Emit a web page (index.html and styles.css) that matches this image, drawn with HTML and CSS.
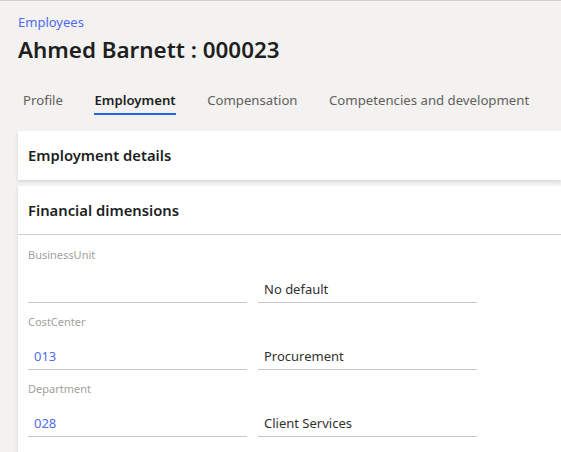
FILE: index.html
```html
<!DOCTYPE html>
<html>
<head>
<meta charset="utf-8">
<link rel="stylesheet" href="styles.css">
</head>
<body>
<div class="page">
  <div class="breadcrumb">Employees</div>
  <h1 class="title">Ahmed Barnett : 000023</h1>
  <nav class="tabs">
    <span class="tab">Profile</span>
    <span class="tab active">Employment</span>
    <span class="tab">Compensation</span>
    <span class="tab">Competencies and development</span>
  </nav>
  <section class="card card-collapsed">
    <div class="card-header">Employment details</div>
  </section>
  <section class="card card-open">
    <div class="card-header bordered">Financial dimensions</div>
    <div class="card-body">
      <div class="dim">
        <div class="label">BusinessUnit</div>
        <div class="fields">
          <div class="field"></div>
          <div class="field">No default</div>
        </div>
      </div>
      <div class="dim">
        <div class="label">CostCenter</div>
        <div class="fields">
          <div class="field link">013</div>
          <div class="field">Procurement</div>
        </div>
      </div>
      <div class="dim">
        <div class="label">Department</div>
        <div class="fields">
          <div class="field link">028</div>
          <div class="field">Client Services</div>
        </div>
      </div>
    </div>
  </section>
</div>
</body>
</html>
```
FILE: styles.css
```css
html, body {
  margin: 0;
  padding: 0;
}
body {
  background: #f3f2f1;
  border-top: 1px solid #d2d0ce;
  font-family: "Noto Sans", "Open Sans", sans-serif;
  color: #323130;
  overflow: hidden;
  height: 451px;
}
.page {
  padding-left: 18px;
}
.breadcrumb {
  margin-top: 11px;
  font-size: 13px;
  line-height: 20px;
  color: #4f6bed;
}
.title {
  margin: 2px 0 0;
  font-size: 22.4px;
  line-height: 32px;
  font-weight: 600;
  color: #201f1e;
}
.tabs {
  display: flex;
  gap: 31.5px;
  margin-top: 14px;
  padding-left: 5px;
}
.tab {
  font-size: 13.2px;
  line-height: 20px;
  padding-top: 10px;
  padding-bottom: 3px;
  border-bottom: 2px solid transparent;
  color: #605e5c;
  white-space: nowrap;
}
.tab.active {
  color: #201f1e;
  font-weight: 600;
  border-bottom-color: #2266e3;
}
.card {
  background: #ffffff;
  box-shadow: 0 1.6px 3.6px rgba(0,0,0,0.13), 0 0.3px 0.9px rgba(0,0,0,0.11);
}
.card-collapsed {
  margin-top: 16px;
}
.card-open {
  margin-top: 6px;
}
.card-header {
  height: 48px;
  line-height: 48px;
  padding-left: 10px;
  font-size: 14.8px;
  font-weight: 600;
  color: #201f1e;
}
.card-collapsed .card-header {
  height: 49px;
  line-height: 49px;
}
.card-header.bordered {
  border-bottom: 1px solid #d2d0ce;
}
.card-body {
  padding: 12px 0 20px 10px;
}
.dim {
  margin-bottom: 11px;
}
.label {
  font-size: 11px;
  line-height: 16px;
  color: #a19f9d;
}
.fields {
  display: flex;
  gap: 11px;
  margin-top: 9px;
}
.field {
  width: 213px;
  height: 26px;
  padding-top: 4px;
  line-height: 26px;
  padding-left: 6px;
  font-size: 13px;
  color: #323130;
  border-bottom: 1px solid #c8c6c4;
}
.field.link {
  color: #4f6bed;
}
```
